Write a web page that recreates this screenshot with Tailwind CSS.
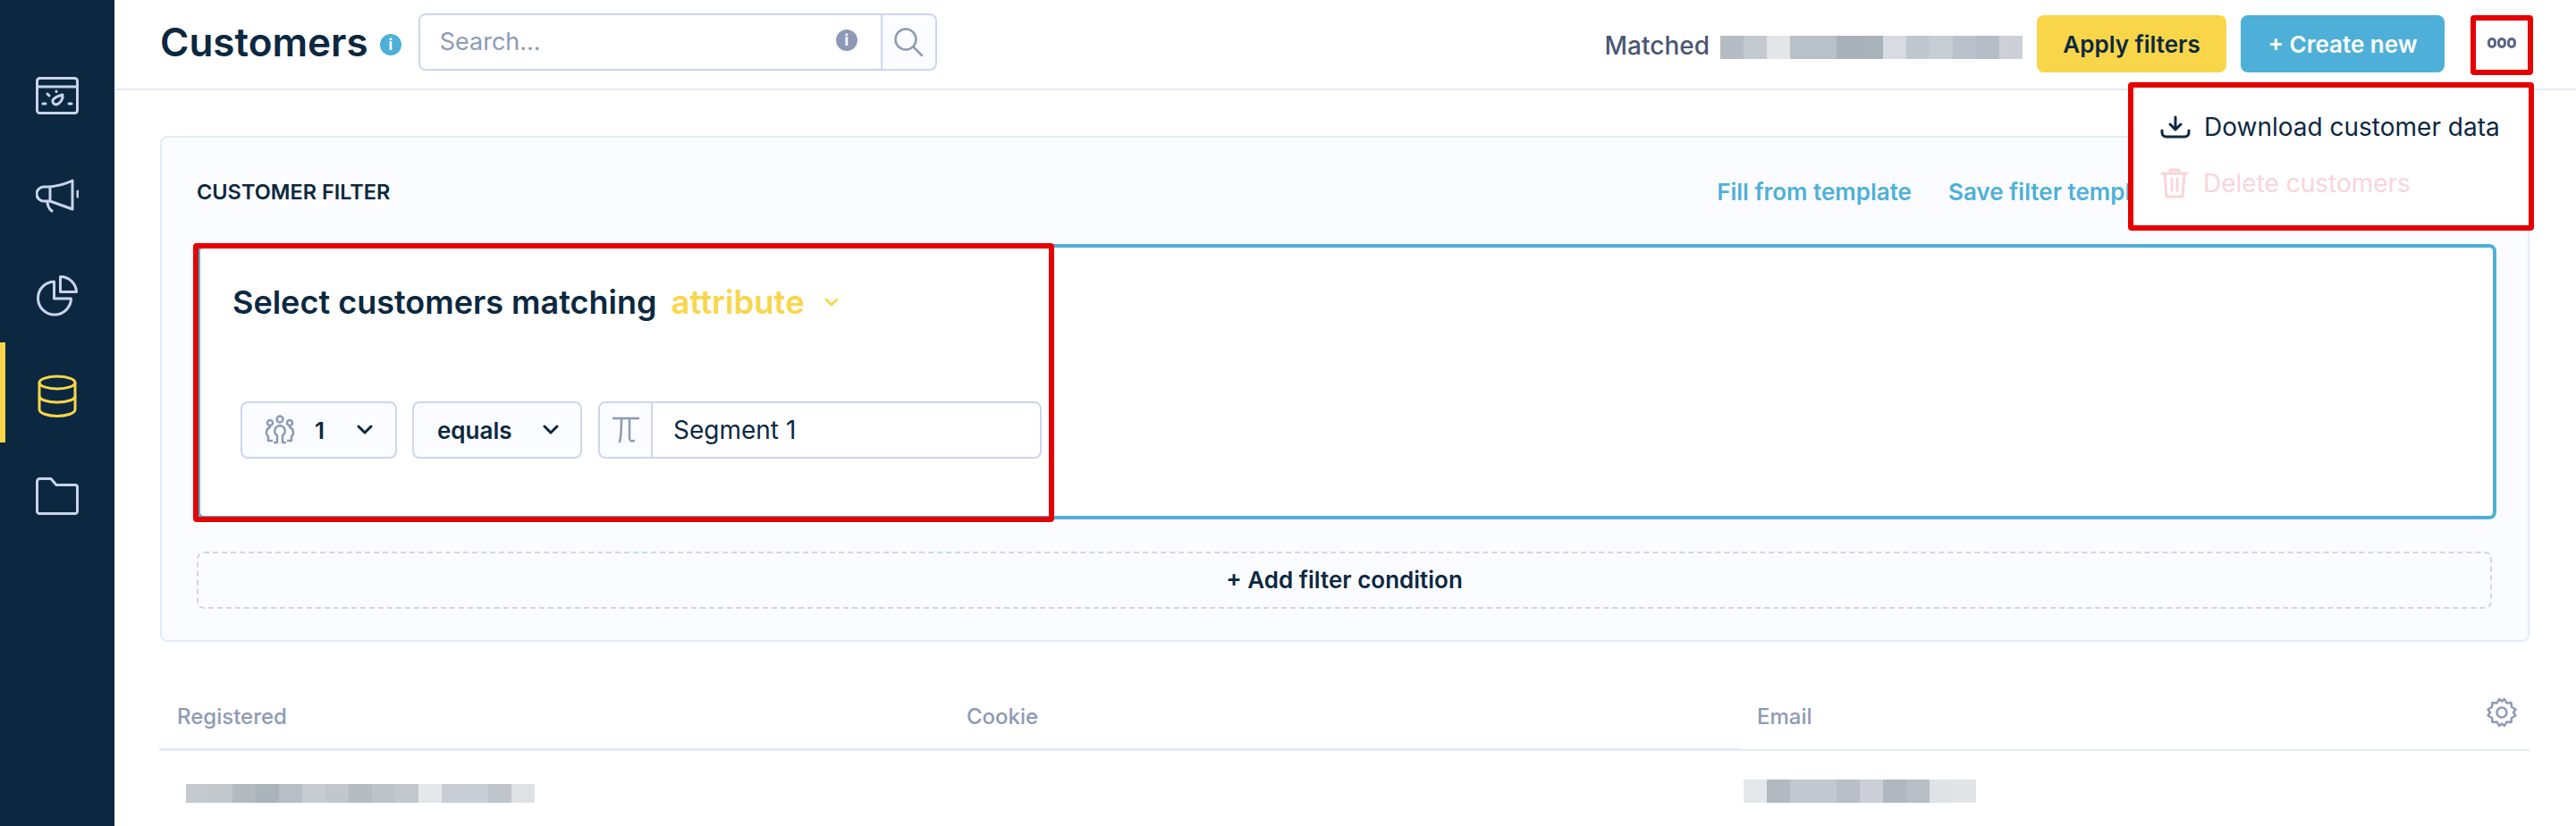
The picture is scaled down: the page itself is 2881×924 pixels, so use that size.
<!DOCTYPE html>
<html lang="en">

<head>
    <meta charset="UTF-8">
    <meta name="viewport" content="width=device-width, initial-scale=1.0">
    <title>Customers</title>
    <script src="https://cdn.jsdelivr.net/npm/@tailwindcss/browser@4"></script>
</head>

<body class="bg-white font-['Inter',sans-serif] text-[#0c2840]">
    <div class="relative flex h-[924px] w-[2881px] overflow-hidden">
        <!-- Sidebar -->
        <nav class="flex w-[128px] shrink-0 flex-col bg-[#0c2840] pt-[47px] text-[#c8d4ea]">
            <a class="flex h-[112px] items-center justify-center pt-2">
                <svg width="48" height="42" viewBox="0 0 48 42" fill="none" stroke="currentColor" stroke-width="3" stroke-linecap="round" stroke-linejoin="round">
                    <rect x="1.5" y="1.5" width="45" height="39" rx="3" />
                    <path d="M2 11H46" />
                    <path d="M30 20C31 25 27 30 23 31A4 4 0 0 1 19 26C21 23 26 21 30 20Z" />
                    <path d="M23 16V16.5M13 19L15 21M8 30H11M37 30H40" />
                </svg>
            </a>
            <a class="flex h-[112px] items-center justify-center pt-2">
                <svg width="48" height="38" viewBox="0 0 48 38" fill="none" stroke="currentColor" stroke-width="3" stroke-linecap="round" stroke-linejoin="round">
                    <path d="M41 2V34L16 25V9C25 8 33 6 41 2Z" />
                    <path d="M16 9H9A8 8 0 0 0 9 25H16" />
                    <path d="M13 25C13 30 14 33 18 36" />
                    <path d="M47 14V20" />
                </svg>
            </a>
            <a class="flex h-[112px] items-center justify-center pt-2">
                <svg width="46" height="46" viewBox="0 0 46 46" fill="none" stroke="currentColor" stroke-width="3" stroke-linejoin="round">
                    <path d="M19.5 7A18.5 18.5 0 1 0 38.5 26H19.5Z" />
                    <path d="M26.5 1.5A18 18 0 0 1 44.5 18.5H26.5Z" />
                </svg>
            </a>
            <a class="relative flex h-[112px] items-center justify-center pt-2 text-[#f9d649]">
                <span class="absolute left-0 top-0 h-full w-[6px] bg-[#f9d649]"></span>
                <svg width="44" height="48" viewBox="0 0 44 48" fill="none" stroke="currentColor" stroke-width="3">
                    <ellipse cx="22" cy="9" rx="20" ry="7" />
                    <path d="M2 9V39C2 43 11 46.5 22 46.5S42 43 42 39V9" />
                    <path d="M2 24C2 28 11 31 22 31S42 28 42 24" />
                </svg>
            </a>
            <a class="flex h-[112px] items-center justify-center pt-2">
                <svg width="48" height="42" viewBox="0 0 48 42" fill="none" stroke="currentColor" stroke-width="3" stroke-linejoin="round">
                    <path d="M4.500 1.500H17L23 8.500H44A2.500 2.500 0 0 1 46.500 11V38A2.500 2.500 0 0 1 44 40.500H4A2.500 2.500 0 0 1 1.500 38V4.500A3 3 0 0 1 4.500 1.500Z" />
                </svg>
            </a>
        </nav>

        <main class="min-w-0 flex-1">
            <!-- Header -->
            <header class="flex h-[101px] items-start border-b-2 border-[#e3ebf8] pl-[51px] pt-[15px]">
                <h1 class="mt-[4px] text-[44px] font-semibold leading-[56px]">Customers</h1>
                <span class="ml-[13px] mt-[23px] flex h-6 w-6 items-center justify-center rounded-full bg-[#4eb0d8] text-[17px] font-bold leading-none text-white">i</span>
                <div class="ml-[19px] flex h-[64px] w-[580px] rounded-lg border-2 border-[#ccd6ee]">
                    <div class="flex flex-1 items-center justify-between pl-[22px] pr-[26px]">
                        <span class="text-[27px] text-[#8e9ab5]">Search...</span>
                        <span class="mb-[4px] flex h-6 w-6 items-center justify-center rounded-full bg-[#8e9ab5] text-[17px] font-bold leading-none text-white">i</span>
                    </div>
                    <div class="flex w-[61px] items-center justify-center rounded-r-lg border-l-2 border-[#ccd6ee] bg-[#fbfcff]">
                        <svg width="34" height="34" viewBox="0 0 34 34" fill="none" stroke="#8e9ab5" stroke-width="2.500" stroke-linecap="round">
                            <circle cx="14" cy="14" r="11.500" />
                            <path d="M22.500 22.500L32 32" />
                        </svg>
                    </div>
                </div>

                <div class="ml-auto flex items-center pt-[16px] text-[28px] font-medium leading-[40px] text-[#4a5673]">Matched</div>
                <div class="ml-[12px] mt-[25px] flex h-[26px]">
                    <i class="w-[26px] bg-[#b5bcc3]"></i><i class="w-[26px] bg-[#c5cad1]"></i><i class="w-[26px] bg-[#e3e6e9]"></i><i class="w-[26px] bg-[#b9c1c8]"></i><i class="w-[26px] bg-[#b9c1c8]"></i><i class="w-[26px] bg-[#a8b1b9]"></i><i class="w-[26px] bg-[#a8b3b9]"></i><i class="w-[26px] bg-[#d8dbe2]"></i><i class="w-[26px] bg-[#c2c6cf]"></i><i class="w-[26px] bg-[#c9cdd4]"></i><i class="w-[26px] bg-[#bcc0ca]"></i><i class="w-[26px] bg-[#b8bcc6]"></i><i class="w-[26px] bg-[#ccd0d6]"></i>
                </div>
                <button class="ml-[16px] mt-[2px] h-[64px] w-[212px] rounded-lg bg-[#f9d649] text-[26px] font-semibold">Apply filters</button>
                <button class="ml-[16px] mt-[2px] h-[64px] w-[228px] rounded-lg bg-[#4eb0d8] text-[26px] font-semibold text-white">+ Create new</button>
                <button class="ml-[48px] mr-[67px] mt-[27px] flex gap-[1px]">
                    <span class="h-[12px] w-[10px] rounded-full border-[3px] border-[#5a6684]"></span>
                    <span class="h-[12px] w-[10px] rounded-full border-[3px] border-[#5a6684]"></span>
                    <span class="h-[12px] w-[10px] rounded-full border-[3px] border-[#5a6684]"></span>
                </button>
            </header>

            <!-- Customer filter -->
            <section class="ml-[51px] mt-[51px] h-[566px] w-[2650px] rounded-lg border-2 border-[#e3ebf8] bg-[#fbfcff] pl-[39px] pr-[35px]">
                <div class="flex h-[119px] items-center justify-between pt-[2px]">
                    <h2 class="text-[23.500px] font-semibold uppercase">Customer filter</h2>
                    <div class="flex gap-[41px] pr-[3px] text-[26px] font-semibold text-[#4eb0d8]">
                        <a>Fill from template</a>
                        <a class="w-[610px]">Save filter template</a>
                    </div>
                </div>

                <div class="h-[308px] rounded-lg border-4 border-[#4eb0d8] bg-white pl-[36px]">
                    <div class="flex items-center pt-[36px] text-[36px] font-semibold leading-[50px]">
                        <span>Select customers matching</span>
                        <span class="ml-[16px] text-[36.500px] text-[#f9d649]">attribute</span>
                        <svg class="ml-[22px]" width="16" height="10" viewBox="0 0 16 10" fill="none" stroke="#f9d649" stroke-width="2.500" stroke-linecap="round" stroke-linejoin="round">
                            <path d="M2 2L8 8L14 2" />
                        </svg>
                    </div>
                    <div class="ml-[9px] mt-[86px] flex h-[64px]">
                        <div class="flex w-[175px] items-center rounded-lg border-2 border-[#ccd6ee] bg-[#fbfcff] pl-[25px] text-[26px] font-semibold">
                            <svg width="34" height="34" viewBox="0 0 34 34" fill="none" stroke="#8e9ab5" stroke-width="2.500" stroke-linecap="round" stroke-linejoin="round">
                                <circle cx="17" cy="5" r="3.500" />
                                <circle cx="6" cy="9" r="3" />
                                <circle cx="28" cy="9" r="3" />
                                <path d="M11 31H14V23C10 21 10 13 17 12C24 13 24 21 20 23V31H23" />
                                <path d="M6 14C1 16 1 22 4 24V29H8M28 14C33 16 33 22 30 24V29H26" />
                            </svg>
                            <span class="ml-[22px]">1</span>
                            <svg class="ml-[36px]" width="18" height="12" viewBox="0 0 18 12" fill="none" stroke="#0c2840" stroke-width="3" stroke-linecap="round" stroke-linejoin="round">
                                <path d="M2 2L9 9L16 2" />
                            </svg>
                        </div>
                        <div class="ml-[17px] flex w-[190px] items-center rounded-lg border-2 border-[#ccd6ee] bg-[#fbfcff] pl-[26px] text-[26px] font-semibold">
                            <span>equals</span>
                            <svg class="ml-[34px]" width="18" height="12" viewBox="0 0 18 12" fill="none" stroke="#0c2840" stroke-width="3" stroke-linecap="round" stroke-linejoin="round">
                                <path d="M2 2L9 9L16 2" />
                            </svg>
                        </div>
                        <div class="ml-[18px] flex w-[496px] rounded-lg border-2 border-[#ccd6ee]">
                            <div class="flex w-[59px] items-center justify-center rounded-l-lg border-r-2 border-[#ccd6ee] bg-[#fbfcff]">
                                <svg width="32" height="30" viewBox="0 0 32 30" fill="none" stroke="#8e9ab5" stroke-width="2.500" stroke-linecap="round">
                                    <path d="M2 2H30" />
                                    <path d="M11 2C11 12 11 22 9 28" />
                                    <path d="M20 2V24C20 27 22 28 25 27" />
                                </svg>
                            </div>
                            <span class="flex flex-1 items-center pl-[23px] text-[28px]">Segment 1</span>
                        </div>
                    </div>
                </div>

                <button class="mt-[36px] h-[64px] w-[2567px] rounded-lg border-2 border-dashed border-[#ccd6ee] pb-[2px] text-[26px] font-semibold">+ Add filter condition</button>
            </section>

            <!-- Table -->
            <div class="ml-[50px] mt-[51px] w-[2651px]">
                <div class="relative grid h-[71px] grid-cols-[884px_884px_1fr] text-[24px] font-medium text-[#8e9ab5]">
                    <div class="border-b-[3px] border-[#e3ebf8] pl-[20px] pt-[15px]">Registered</div>
                    <div class="border-b-[3px] border-[#e3ebf8] pl-[19px] pt-[15px]">Cookie</div>
                    <div class="border-b-2 border-[#e3ebf8] pl-[19px] pt-[15px]">Email</div>
                    <svg class="absolute right-[14px] top-[11px]" width="34" height="34" viewBox="0 0 34 34" fill="none" stroke="#8e9ab5" stroke-width="2.500" stroke-linejoin="round">
                        <circle cx="17" cy="17" r="5.500" />
                        <path d="M14 2L17 4.500L20 2L22.500 6.500L27.500 6L28 11L32.500 13.500L30 17L32.500 20.500L28 23L27.500 28L22.500 27.500L20 32L17 29.500L14 32L11.500 27.500L6.500 28L6 23L1.500 20.500L4 17L1.500 13.500L6 11L6.500 6L11.500 6.500Z" />
                    </svg>
                </div>
                <div class="grid grid-cols-[1772px_1fr]">
                    <div class="ml-[30px] mt-[37px] flex h-[21px]">
                        <i class="w-[26px] bg-[#c5cad0]"></i><i class="w-[26px] bg-[#c4c9ce]"></i><i class="w-[26px] bg-[#b3bbc1]"></i><i class="w-[26px] bg-[#a9b4ba]"></i><i class="w-[26px] bg-[#b7bfc6]"></i><i class="w-[26px] bg-[#c6ccd2]"></i><i class="w-[26px] bg-[#c1c7cc]"></i><i class="w-[26px] bg-[#b5bdc3]"></i><i class="w-[26px] bg-[#bcc3c9]"></i><i class="w-[26px] bg-[#c2c8ce]"></i><i class="w-[26px] bg-[#e5e8ea]"></i><i class="w-[26px] bg-[#c9cdd5]"></i><i class="w-[26px] bg-[#c8ced5]"></i><i class="w-[26px] bg-[#bfc5cb]"></i><i class="w-[26px] bg-[#dfe2e5]"></i>
                    </div>
                    <div class="mt-[32px] flex h-[26px]">
                        <i class="w-[26px] bg-[#e5e8ea]"></i><i class="w-[26px] bg-[#b2b9c1]"></i><i class="w-[26px] bg-[#c2c8cf]"></i><i class="w-[26px] bg-[#c2c8cf]"></i><i class="w-[26px] bg-[#b7bec5]"></i><i class="w-[26px] bg-[#ccd0d6]"></i><i class="w-[26px] bg-[#b0b7c0]"></i><i class="w-[26px] bg-[#b7bec6]"></i><i class="w-[26px] bg-[#dfe3e6]"></i><i class="w-[26px] bg-[#e2e5e7]"></i>
                    </div>
                </div>
            </div>
        </main>

        <!-- Dropdown menu -->
        <div class="absolute left-[2386px] top-[98px] h-[156px] w-[442px] rounded-b-lg bg-white shadow-[0_2px_0_#e8e8ee]">
            <div class="flex h-[86px] items-center pl-[30px] pt-[1px] text-[28px]">
                <svg width="34" height="26" viewBox="0 0 34 26" fill="none" stroke="#0c2840" stroke-width="3" stroke-linecap="round" stroke-linejoin="round">
                    <path d="M17 2V16M11 10L17 16L23 10" />
                    <path d="M2 17V19C2 22 4 24 7 24H27C30 24 32 22 32 19V17" />
                </svg>
                <span class="ml-[15px]">Download customer data</span>
            </div>
            <div class="flex h-[42px] items-center pl-[30px] text-[28px] text-[#f9d5da]">
                <svg width="32" height="34" viewBox="0 0 32 34" fill="none" stroke="#f9d5da" stroke-width="3" stroke-linecap="round" stroke-linejoin="round">
                    <path d="M2 6H30M11 6V2H21V6M5 6L7 32H25L27 6M13 12V25M19 12V25" />
                </svg>
                <span class="ml-[16px]">Delete customers</span>
            </div>
        </div>

        <!-- Red annotation frames -->
        <div class="pointer-events-none absolute left-[216px] top-[272px] h-[312px] w-[963px] rounded-sm border-[6px] border-[#e60000]"></div>
        <div class="pointer-events-none absolute left-[2763px] top-[17px] h-[67px] w-[70px] rounded-sm border-[6px] border-[#e60000]"></div>
        <div class="pointer-events-none absolute left-[2380px] top-[92px] h-[166px] w-[454px] rounded-sm border-[6px] border-[#e60000]"></div>
    </div>
</body>

</html>
